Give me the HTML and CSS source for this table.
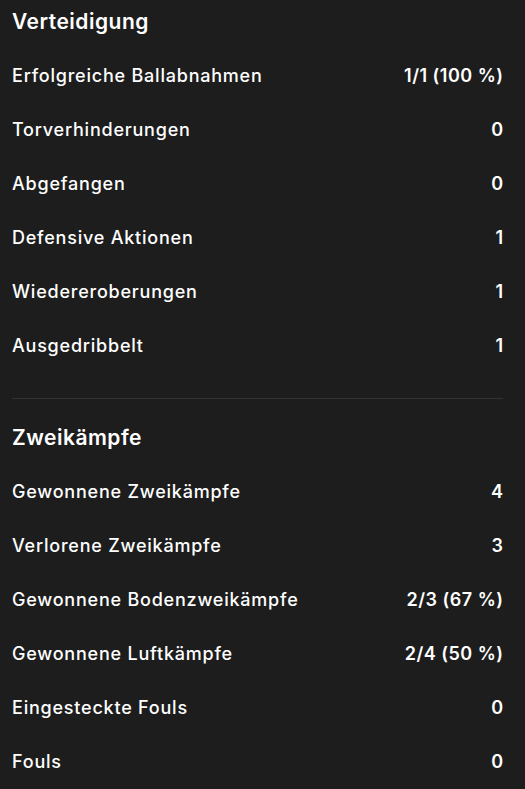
FILE: index.html
```html
<!DOCTYPE html>
<html lang="de">
<head>
<meta charset="utf-8">
<link rel="stylesheet" href="styles.css">
</head>
<body>
<div class="page">
  <section class="section">
    <h2 class="title">Verteidigung</h2>
    <div class="row"><span class="label">Erfolgreiche Ballabnahmen</span><span class="value">1/1 (100 %)</span></div>
    <div class="row"><span class="label">Torverhinderungen</span><span class="value">0</span></div>
    <div class="row"><span class="label">Abgefangen</span><span class="value">0</span></div>
    <div class="row"><span class="label">Defensive Aktionen</span><span class="value">1</span></div>
    <div class="row"><span class="label">Wiedereroberungen</span><span class="value">1</span></div>
    <div class="row"><span class="label">Ausgedribbelt</span><span class="value">1</span></div>
  </section>
  <hr class="divider">
  <section class="section">
    <h2 class="title">Zweikämpfe</h2>
    <div class="row"><span class="label">Gewonnene Zweikämpfe</span><span class="value">4</span></div>
    <div class="row"><span class="label">Verlorene Zweikämpfe</span><span class="value">3</span></div>
    <div class="row"><span class="label">Gewonnene Bodenzweikämpfe</span><span class="value">2/3 (67 %)</span></div>
    <div class="row"><span class="label">Gewonnene Luftkämpfe</span><span class="value">2/4 (50 %)</span></div>
    <div class="row"><span class="label">Eingesteckte Fouls</span><span class="value">0</span></div>
    <div class="row"><span class="label">Fouls</span><span class="value">0</span></div>
  </section>
</div>
</body>
</html>
```
FILE: styles.css
```css
html, body {
  margin: 0;
  padding: 0;
  background: #1d1d1d;
}
body {
  font-family: Inter, "Noto Sans", sans-serif;
  color: #ffffff;
}
.page {
  padding: 0 22px 0 12px;
}
.section {
  padding-top: 12px;
}
.title {
  margin: 0;
  padding-bottom: 17px;
  font-size: 21px;
  line-height: 20px;
  font-weight: 600;
  letter-spacing: 0.5px;
}
.row {
  height: 54px;
  display: flex;
  align-items: center;
  justify-content: space-between;
  font-size: 18px;
  line-height: 22px;
}
.label {
  font-weight: 500;
  letter-spacing: 0.78px;
}
.value {
  font-weight: 600;
  letter-spacing: 0.5px;
  margin-right: -0.5px;
}
.divider {
  border: 0;
  height: 1px;
  background: #333333;
  margin: 25px 0 17px 0;
}
```
